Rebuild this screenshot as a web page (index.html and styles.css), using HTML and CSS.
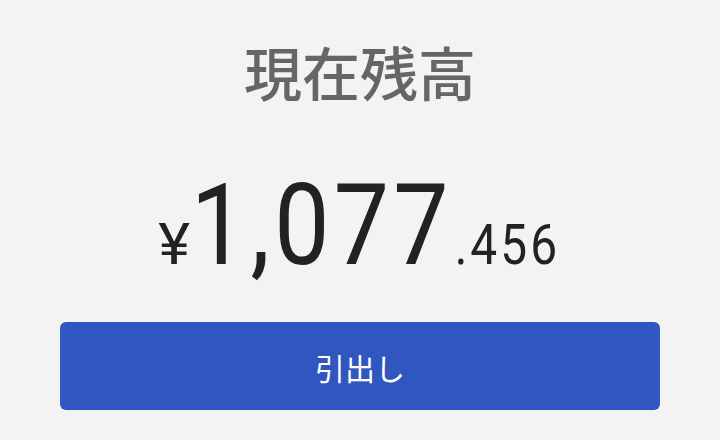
FILE: index.html
```html
<!DOCTYPE html>
<html>
<head>
  <link rel="stylesheet" href="styles.css">
</head>
<body>
  <div class="balance">
    <h1 class="title">現在残高</h1>
    <div class="amount">
      <span class="currency">¥</span><span class="integer">1,077</span><span class="decimal">.456</span>
    </div>
    <button class="withdraw">引出し</button>
  </div>
</body>
</html>
```

FILE: styles.css
```css
body {
  margin: 0;
  background: #f3f3f3;
  font-family: "Noto Sans CJK JP", "Noto Sans", sans-serif;
}
.balance {
  display: flex;
  flex-direction: column;
  align-items: center;
  padding: 0 60px;
}
.title {
  margin: 40px 0 0;
  font-size: 58px;
  line-height: 62px;
  font-weight: 500;
  color: #666666;
}
.amount {
  margin-top: 67px;
  display: flex;
  align-items: baseline;
  font-family: Roboto, sans-serif;
  color: #222222;
  line-height: 1;
  transform: scaleX(0.87);
}
.currency {
  font-size: 58px;
  transform: scaleX(1.2);
  margin-right: 4px;
}
.integer {
  font-size: 113px;
  letter-spacing: 5px;
}
.decimal {
  font-size: 55px;
  letter-spacing: 3.5px;
  margin-left: 2px;
}
.withdraw {
  margin-top: 40px;
  width: 100%;
  height: 88px;
  padding-top: 3px;
  border: none;
  border-radius: 6px;
  background: #2f57bf;
  color: #ffffff;
  font-family: "Noto Sans CJK JP", sans-serif;
  font-size: 30px;
}
```
